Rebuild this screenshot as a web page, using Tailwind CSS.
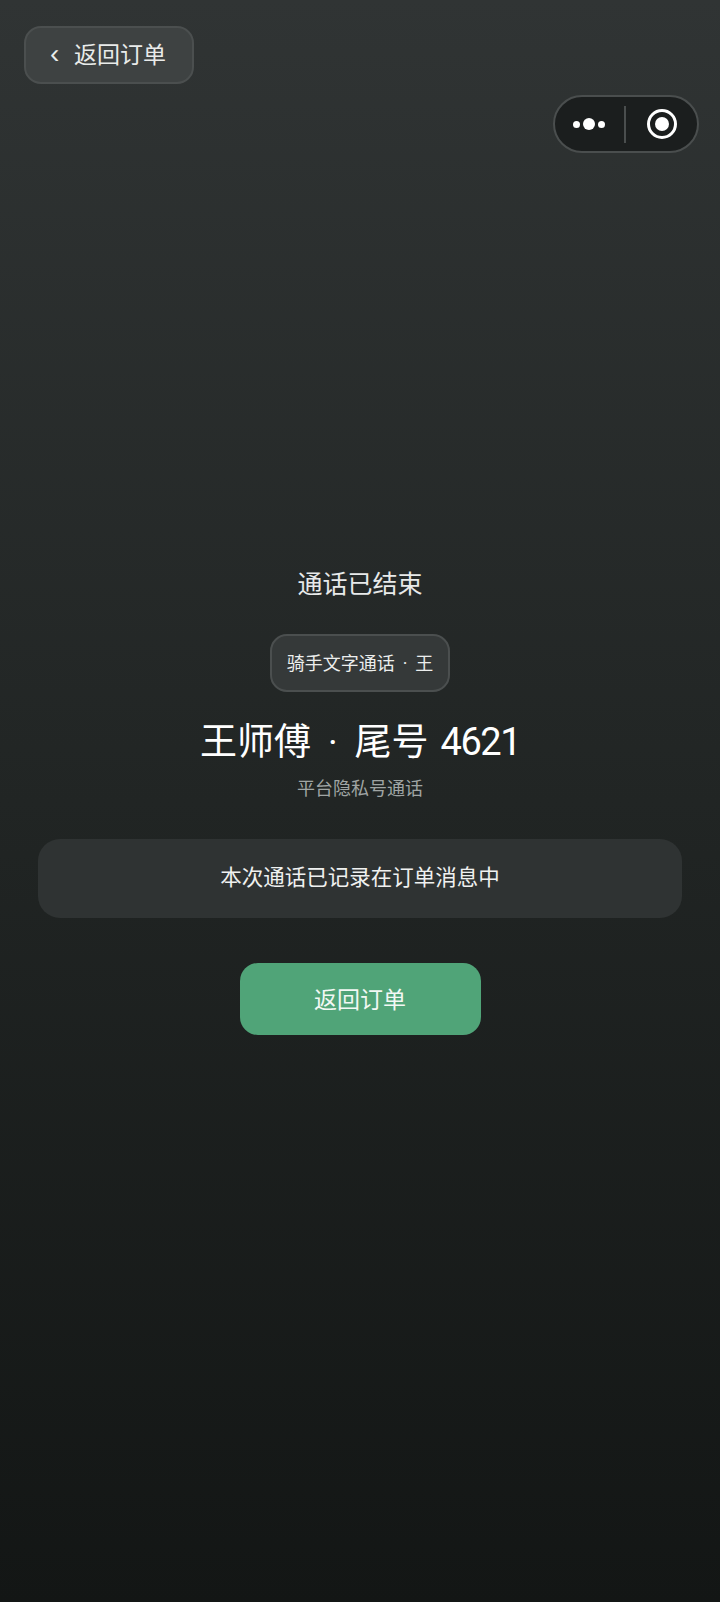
<!DOCTYPE html>
<html lang="zh-CN">
<head>
<meta charset="UTF-8" />
<meta name="viewport" content="width=device-width, initial-scale=1.0" />
<script src="https://cdn.jsdelivr.net/npm/@tailwindcss/browser@4"></script>
<title>通话已结束</title>
</head>
<body class="m-0 p-0">
<div class="relative w-[720px] h-[1602px] overflow-hidden bg-gradient-to-b from-[#303434] via-[#212524] via-50% to-[#131615] font-['Roboto','Noto_Sans_CJK_SC',sans-serif] text-white">

  <!-- back -->
  <div class="pt-[26px] pl-[24px]">
    <div class="flex items-center w-[170px] h-[58px] rounded-[17px] border-2 border-[#4b4f4f] bg-[#3e4242] pl-[24px] text-[#e9ebea]">
      <span class="text-[28px] leading-none w-[24px] font-['Liberation_Sans',sans-serif] relative top-[-1px]">‹</span>
      <span class="text-[23px] leading-none">返回订单</span>
    </div>
  </div>

  <!-- capsule -->
  <div class="absolute left-[553px] top-[95px] flex items-center w-[146px] h-[58px] rounded-full border-2 border-[#4a4e4e] bg-[#1b1e1e]">
    <div class="flex items-center justify-center gap-[3px] w-[70px] pr-[2px]">
      <span class="w-[7px] h-[7px] rounded-full bg-white"></span>
      <span class="w-[12px] h-[12px] rounded-full bg-white"></span>
      <span class="w-[7px] h-[7px] rounded-full bg-white"></span>
    </div>
    <div class="w-[2px] h-[37px] bg-[#4a4e4e]"></div>
    <div class="flex items-center justify-center w-[72px]">
      <div class="flex items-center justify-center w-[30px] h-[30px] rounded-full border-[3px] border-white">
        <span class="w-[14px] h-[14px] rounded-full bg-white"></span>
      </div>
    </div>
  </div>

  <!-- main -->
  <div class="flex flex-col items-center pt-[483px]">
    <p class="text-[25px] leading-[36px] text-[#e8eaea]">通话已结束</p>
    <div class="mt-[31px] flex items-center h-[58px] px-[14.5px] rounded-[17px] border-2 border-[#4b4f4f] bg-[#353939] text-[18px] text-[#eceeed] whitespace-pre">骑手文字通话<span class="mx-[8px]">·</span>王</div>
    <h1 class="mt-[25px] text-[37px] leading-[52px] font-normal text-white whitespace-pre">王师傅<span class="mx-[17px]">·</span>尾号<span class="ml-[12px] text-[38px] leading-none tracking-[-1.5px]">4621</span></h1>
    <p class="mt-[7px] text-[18px] leading-[26px] text-[#a0a5a4]">平台隐私号通话</p>
    <div class="mt-[37px] flex items-center justify-center w-[644px] h-[79px] rounded-[22px] bg-[#2f3333] text-[21.5px] text-[#eff1f0]">本次通话已记录在订单消息中</div>
    <div class="mt-[45px] flex items-center justify-center w-[241px] h-[72px] pt-[4px] rounded-[18px] bg-[#50a478] text-[23px] text-[#f2f8f4]">返回订单</div>
  </div>
</div>
</body>
</html>
